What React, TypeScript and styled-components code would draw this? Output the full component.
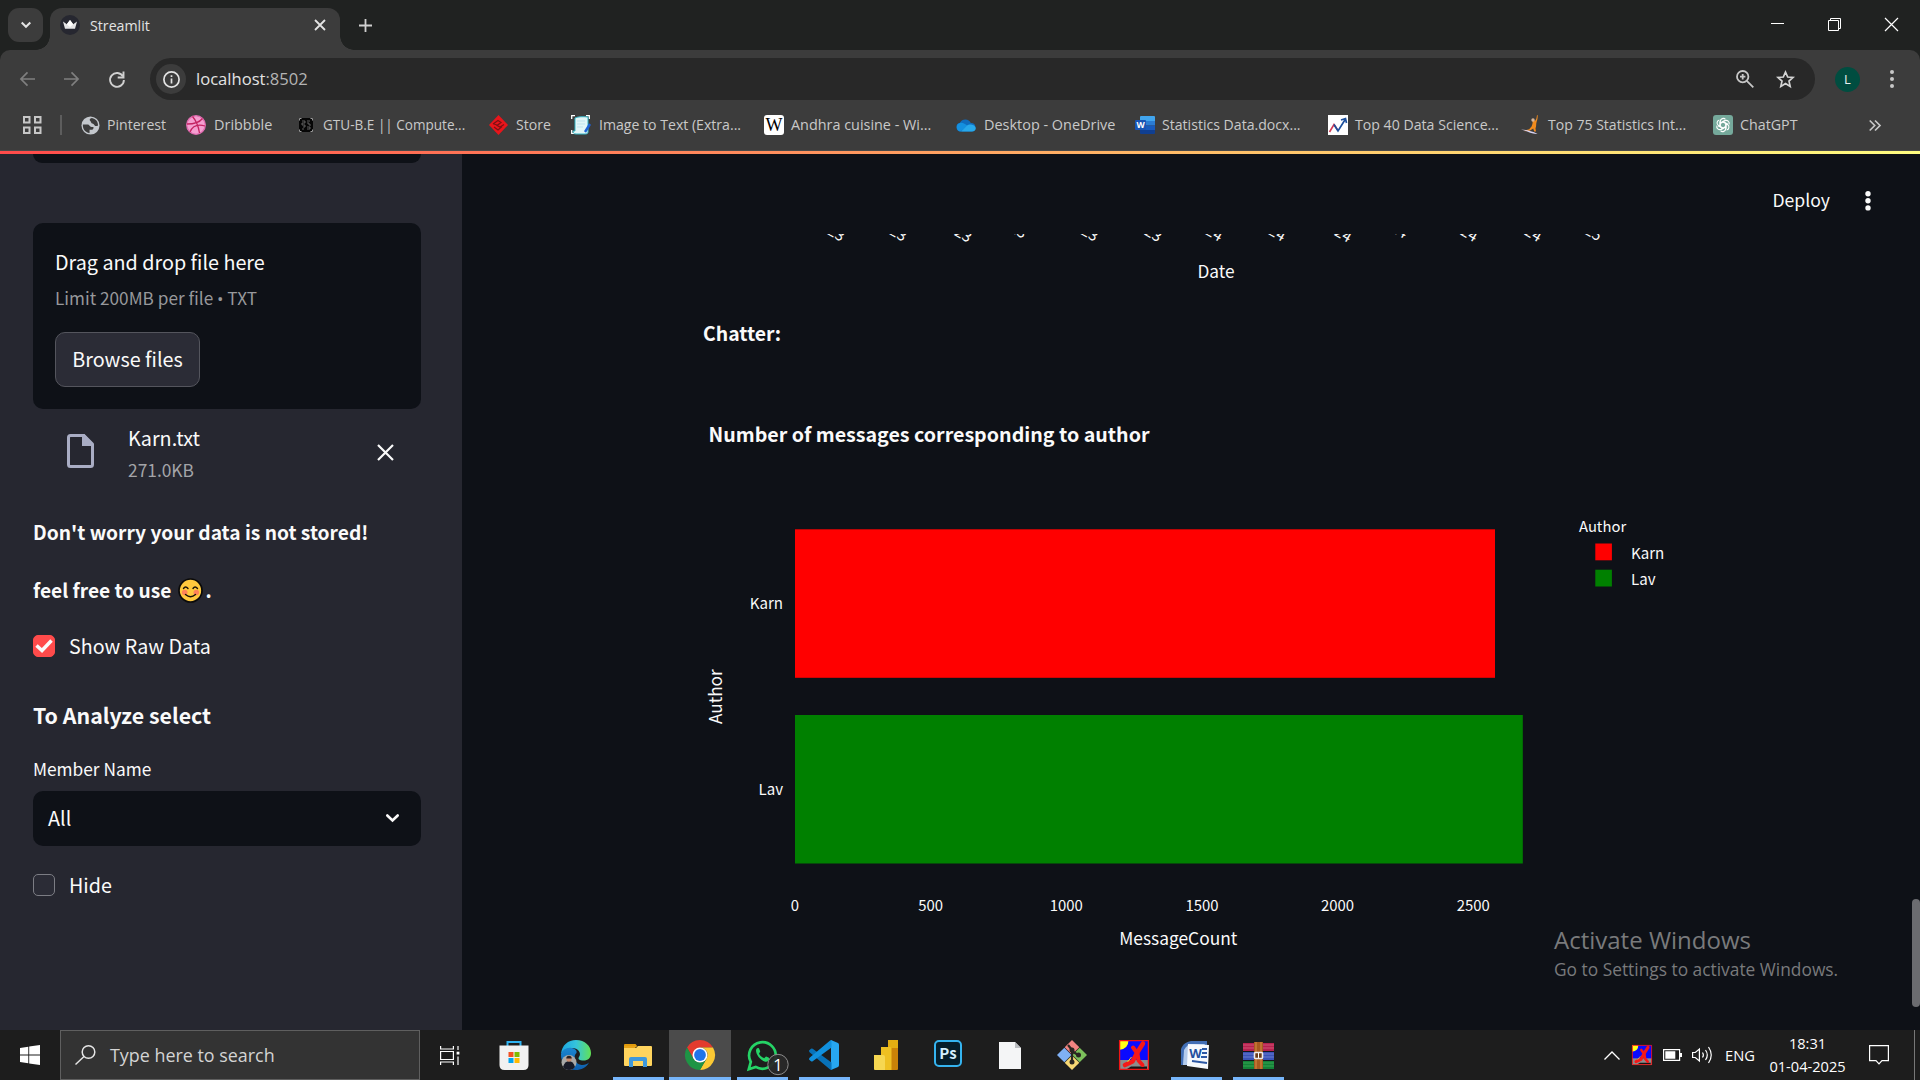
import React from "react";
import styled, { createGlobalStyle } from "styled-components";

const UI = `"Open Sans", "Noto Sans", sans-serif`;
const APP = `"Noto Sans CJK SC", "Noto Sans", sans-serif`;

const GlobalStyle = createGlobalStyle`
  * { box-sizing: border-box; }
  body { margin: 0; overflow: hidden; background: #0e1117; }
`;

const Screen = styled.div`
  width: 1920px;
  height: 1080px;
  display: flex;
  flex-direction: column;
  position: relative;
  overflow: hidden;
  white-space: nowrap;
  font-family: ${UI};
`;

const Icon = styled.svg`
  display: block;
  flex: none;
  overflow: visible;
`;

/* ---------- Browser chrome ---------- */

const TabStrip = styled.div`
  height: 50px;
  padding: 8px 22px 0 8px;
  display: flex;
  background: #202221;
`;
const TabSearch = styled.div`
  width: 35px;
  height: 34px;
  border-radius: 11px;
  background: #3c3c3c;
  display: flex;
  align-items: center;
  justify-content: center;
`;
const Tab = styled.div`
  margin-left: 7px;
  width: 290px;
  height: 42px;
  padding: 0 15px 8px 10px;
  border-radius: 12px 12px 0 0;
  background:#3c3c3c;
  display: flex;
  align-items: center;
  position: relative;
  &::before, &::after {
    content: "";
    position: absolute;
    bottom: 0;
    width: 14px;
    height: 14px;
  }
  &::before { left: -14px; background: radial-gradient(circle at 0 0, transparent 13.5px, #3c3c3c 14px); }
  &::after { right: -14px; background: radial-gradient(circle at 100% 0, transparent 13.5px, #3c3c3c 14px); }
`;
const TabTitle = styled.span`
  flex: 1;
  margin-left: 10px;
  padding-top: 1px;
  font-size: 14.2px;
  line-height: 34px;
  color: #e3e3e3;
`;
const NewTab = styled.div`
  padding: 11px 0 0 19px;
  flex: 1;
`;
const WindowButtons = styled.div`
  display: flex;
  align-items: flex-start;
  gap: 44px;
  padding: 10px 0 0;
`;

const ToolbarFrame = styled.div`
  background: #202221;
`;
const Toolbar = styled.div`
  height: 50px;
  padding: 8px 24px 0 20px;
  border-radius: 10px 10px 0 0;
  background: #3c3c3c;
  display: flex;
  align-items: center;
`;
const NavButtons = styled.div`
  width: 130px;
  flex: none;
  display: flex;
  gap: 29px;
`;
const Omnibox = styled.div`
  width: 1665px;
  flex: none;
  height: 42px;
  border-radius: 21px;
  background: #282828;
  padding: 0 20px 0 6px;
  display: flex;
  align-items: center;
`;
const SiteInfo = styled.div`
  width: 30px;
  height: 30px;
  border-radius: 50%;
  background: #3c3c3c;
  display: flex;
  align-items: center;
  justify-content: center;
`;
const Address = styled.span`
  flex: 1;
  margin-left: 10px;
  font-size: 16.6px;
  line-height: 40px;
  color: #e3e3e3;
`;
const Port = styled.span`
  color: #b4b4b4;
`;
const OmniActions = styled.div`
  display: flex;
  align-items: center;
  gap: 22px;
`;
const Avatar = styled.div`
  margin: 0 28px 0 20px;
  flex: none;
  width: 25px;
  height: 25px;
  border-radius: 50%;
  background: #004d40;
  color: #e8f0ee;
  font-size: 13px;
  line-height: 25px;
  text-align: center;
`;

const Bookmarks = styled.div`
  height: 51px;
  padding-left: 23px;
  background: #3c3c3c;
  border-bottom: 1px solid #4a4a4a;
  display: flex;
  align-items: center;
`;
const Divider = styled.div`
  width: 2px;
  height: 20px;
  margin: 0 19px 0 18px;
  background: #5d5d5d;
`;
const Bookmark = styled.div<{ $w: number; $gap?: number; $size?: number }>`
  width: ${(p) => p.$w}px;
  flex: none;
  display: flex;
  align-items: center;
  gap: ${(p) => p.$gap ?? 8}px;
  color: #c9c9c9;
  font-size: ${(p) => p.$size ?? 14.1}px;
  line-height: 48px;
`;
const Rainbow = styled.div`
  height: 3px;
  background: linear-gradient(90deg, #ff4b4b, #ff8a5c 38%, #ffbd68 62%, #fffd80);
`;

/* ---------- Streamlit page ---------- */

const Page = styled.div`
  height: 876px;
  display: flex;
  font-family: ${APP};
  color: #fafafa;
`;
const Sidebar = styled.aside`
  width: 462px;
  padding: 0 41px 0 33px;
  background: #262730;
  display: flex;
  flex-direction: column;
`;
const ScrolledCard = styled.div`
  height: 9px;
  margin-bottom: 60px;
  flex: none;
  border-radius: 0 0 10px 10px;
  background: #0e1117;
`;
const Dropzone = styled.div`
  height: 186px;
  padding: 23px 22px 22px;
  border-radius: 10px;
  background: #0e1117;
`;
const DropTitle = styled.div`
  font-size: 19.75px;
  line-height: 32px;
`;
const Limit = styled.div`
  height: 40px;
  font-size: 17.2px;
  line-height: 40px;
  margin-bottom: 14px;
  color: #97989b;
`;
const Bullet = styled.span`
  font-family: "Open Sans", sans-serif;
`;
const BrowseButton = styled.button`
  display: block;
  width: 145px;
  height: 55px;
  padding: 0 0 2px;
  border: 1px solid #54555d;
  border-radius: 10px;
  background: #2b2c36;
  color: #fafafa;
  font: 400 19.8px/51px ${APP};
`;
const FileRow = styled.div`
  height: 77px;
  padding: 14px 28px 0 34px;
  display: flex;
`;
const FileGlyph = styled.div`
  width: 61px;
  padding-top: 11px;
`;
const FileInfo = styled.div`
  flex: 1;
`;
const FileName = styled.div`
  font-size: 19.8px;
  line-height: 30px;
`;
const FileSize = styled.div`
  font-size: 17.35px;
  line-height: 34px;
  color: #a3a4a8;
`;
const RemoveFile = styled.div`
  padding-top: 22px;
`;
const Strong = styled.div<{ $top: number }>`
  margin-top: ${(p) => p.$top}px;
  height: 31px;
  display: flex;
  align-items: center;
  font-size: 19.2px;
  font-weight: 700;
  line-height: 31px;
`;
const EmojiSlot = styled.span`
  margin: 0 2px 0 7px;
`;
const CheckRow = styled.div<{ $top: number }>`
  margin-top: ${(p) => p.$top}px;
  height: 22px;
  display: flex;
  align-items: center;
  gap: 14px;
`;
const Box = styled.div<{ $on?: boolean }>`
  width: 22px;
  height: 22px;
  border-radius: 5px;
  border: 1px solid ${(p) => (p.$on ? "#ff4b4b" : "#7c7d84")};
  background: ${(p) => (p.$on ? "#ff4b4b" : "#2b2c36")};
  display: flex;
  align-items: center;
  justify-content: center;
`;
const CheckLabel = styled.span`
  font-size: 19.7px;
  line-height: 20px;
`;
const Subheader = styled.div`
  margin-top: 41px;
  font-size: 21.35px;
  font-weight: 700;
  line-height: 34px;
`;
const FieldLabel = styled.div`
  margin: 25px 0 10px;
  font-size: 17.3px;
  line-height: 24px;
`;
const Select = styled.div`
  height: 55px;
  padding: 0 22px 2px 15px;
  border-radius: 10px;
  background: #0e1117;
  display: flex;
  align-items: center;
  justify-content: space-between;
  font-size: 19.8px;
`;

const Main = styled.main`
  flex: 1;
  background: #0e1117;
  display: flex;
  flex-direction: column;
`;
const Header = styled.header`
  height: 80px;
  padding: 0 48px 0 0;
  display: flex;
  justify-content: flex-end;
  gap: 34px;
`;
const Deploy = styled.span`
  height: 80px;
  font-size: 17.6px;
  line-height: 92px;
`;
const MenuDots = styled.div`
  padding-top: 37px;
`;
const Content = styled.section`
  flex: 1;
  padding-left: 241px;
`;
const Chart = styled.svg`
  display: block;
  fill: #fafafa;
  font-family: ${APP};
`;
const ChatterTitle = styled.div`
  margin: 21px 0 52px;
  font-size: 19.4px;
  font-weight: 700;
  line-height: 31px;
`;
const Thumb = styled.div`
  position: absolute;
  left: 1912px;
  top: 899px;
  width: 8px;
  height: 108px;
  border-radius: 4px;
  background: #6b6c70;
`;
const Watermark = styled.div`
  position: absolute;
  left: 1554px;
  top: 924px;
  color: #797a7c;
`;
const WatermarkTitle = styled.div`
  font-size: 24px;
  line-height: 32px;
`;
const WatermarkText = styled.div`
  font-size: 17.35px;
  line-height: 26px;
`;

/* ---------- Taskbar ---------- */

const Taskbar = styled.div`
  height: 50px;
  background: #1d1d1d;
  display: flex;
  align-items: center;
  color: #fff;
`;
const StartButton = styled.div`
  width: 60px;
  padding-left: 20px;
`;
const SearchBox = styled.div`
  width: 360px;
  height: 50px;
  padding-left: 14px;
  border: 1px solid #5f5f5f;
  background: #333;
  display: flex;
  align-items: center;
  gap: 14px;
  color: #d4d4d4;
  font-size: 17.9px;
`;
const TaskView = styled.div`
  width: 63px;
  padding-left: 20px;
`;
const AppSlot = styled.div<{ $running?: boolean; $active?: boolean }>`
  width: 62px;
  height: 50px;
  display: flex;
  align-items: center;
  justify-content: center;
  background: ${(p) => (p.$active ? "#4b4b4b" : "transparent")};
  position: relative;
  &::after {
    content: "";
    position: absolute;
    bottom: 0;
    left: ${(p) => (p.$active ? 0 : 6)}px;
    right: ${(p) => (p.$active ? 0 : 5)}px;
    height: 3px;
    background: ${(p) => (p.$running || p.$active ? "#76b5fa" : "transparent")};
  }
`;
const Tray = styled.div`
  margin-left: auto;
  display: flex;
  align-items: center;
  height: 50px;
`;
const TrayItem = styled.div<{ $after: number }>`
  margin-right: ${(p) => p.$after}px;
`;
const Language = styled.div`
  width: 44px;
  font-size: 14.7px;
  line-height: 48px;
`;
const Clock = styled.div`
  width: 77px;
  margin-right: 23px;
  text-align: center;
  font-size: 14.6px;
  line-height: 23px;
  padding-bottom: 1px;
`;
const ShowDesktop = styled.div`
  width: 6px;
  height: 50px;
  border-left: 1px solid #777;
`;

/* ---------- Icons ---------- */

const Crown = () => (
  <Icon width="20" height="20" viewBox="0 0 20 20">
    <circle cx="10" cy="10" r="10" fill="#262730" />
    <path d="M3 6.5l3.8 2.8L10 5l3.2 4.3L17 6.5l-2 7.2H5z" fill="#e4e4e6" />
    <path d="M6.8 9.3L10 5l3.2 4.3L10 12z" fill="#fff" />
  </Icon>
);
const Cross = ({ size, color, w }: { size: number; color: string; w: number }) => (
  <Icon width={size} height={size} viewBox={`0 0 ${size} ${size}`}>
    <path d={`M0 0L${size} ${size}M${size} 0L0 ${size}`} stroke={color} strokeWidth={w} />
  </Icon>
);
const Arrow = ({ flip }: { flip?: boolean }) => (
  <Icon width="15" height="16" viewBox="0 0 16 16">
    <path d="M16 8H1.5M8 1L1 8l7 7" transform={flip ? "rotate(180 8 8)" : undefined} fill="none" stroke="#7f7f7f" strokeWidth="1.8" />
  </Icon>
);
const Dots = ({ r, step, color }: { r: number; step: number; color: string }) => (
  <Icon width="8" height={step * 2 + r * 2} viewBox={`0 0 8 ${step * 2 + r * 2}`} fill={color}>
    {[0, 1, 2].map((i) => <circle key={i} cx="4" cy={r + i * step} r={r} />)}
  </Icon>
);

const Globe = () => (
  <Icon width="19" height="19" viewBox="0 0 20 20">
    <circle cx="10" cy="10" r="9.5" fill="#c3c7cc" />
    <path d="M2 9h5c2 0 2 2.500 4 2.500h1.500c1.500 0 .5 3-1.500 3H9v3.500C4.500 17.500 1.500 13.500 2 9z" fill="#3c3c3c" />
    <path d="M11.500 2.200c-2.500.3-3 2-1.500 3.300 1.200 1 .3 2.200 2 2.500 2 .3 1.500 2 3 2.500 1 .3 2 0 2.900-.5C18 6 15.500 3 11.500 2.200z" fill="#3c3c3c" />
  </Icon>
);
const Ball = () => (
  <Icon width="20" height="20" viewBox="0 0 20 20" fill="none" stroke="#c32361" strokeWidth="1.300">
    <circle cx="10" cy="10" r="9.300" fill="#f49ed0" stroke="#e06bb0" />
    <path d="M6.500 1.500c4 4.500 6 10 7 16.500M1 9c7 0 12-1 15.500-5.500M4 17c2.500-6 8-8 15-6" />
  </Icon>
);
const Qr = () => (
  <Icon width="14" height="14" viewBox="0 0 14 14">
    <path d="M0 0h14v14H0z" fill="#060606" />
    <path d="M.5.5h2M11.500.5h2M.5 13.500h2M11.500 13.500h2M.5.5v2M13.500.5v2M.5 11.500v2M13.500 11.500v2" stroke="#9a9a9a" fill="none" />
    <path d="M3 3h3v2H3v2h3v2H4M8 3h3M8 5h2v2h2M8 9h3v2H8M3 11h2" stroke="#777" strokeWidth=".8" fill="none" />
  </Icon>
);
const RedDiamond = () => (
  <Icon width="19" height="20" viewBox="0 0 19 20">
    <path d="M9.500 0L19 10l-9.500 10L0 10z" fill="#e8151b" />
    <path d="M4 9l5-3.500 3 2-4 3 3 1.500 4-2.500M5 12l4 3 4-3.500M8 10l-3-1" stroke="#7d1013" strokeWidth="1.200" fill="none" />
  </Icon>
);
const ScanText = () => (
  <Icon width="20" height="20" viewBox="0 0 20 20">
    <path d="M.7 4V.7H4M15 .7h3.300V4M.7 15v3.300H4" fill="none" stroke="#fff" strokeWidth="1.300" />
    <path d="M4 3c3-1.500 8-1.500 13-1v15c0 1.500-1 2-3 2H5c-2 0-3-1-3-3h2z" fill="#e2f6f8" stroke="#35b5c6" />
    <path d="M6 6h8M6 9h8M6 12h6" stroke="#bfe3ee" />
    <path d="M14 17l5-8" stroke="#1f62d4" strokeWidth="2.400" />
  </Icon>
);
const WikiTile = styled.div`
  width: 20px;
  height: 20px;
  border-radius: 3px;
  background: #fff;
  color: #000;
  font: 18px/20px "Liberation Serif", serif;
  display: flex;
  justify-content: center;
`;
const Cloud = () => (
  <Icon width="20" height="13" viewBox="0 0 20 13">
    <path d="M4.500 12.500A4.400 4.400 0 014 3.800 6 6 0 0114.800 4 4.300 4.300 0 0116 12.500z" fill="#0f6cbd" />
    <path d="M4 3.900c3-.5 5 1 8 3L4.500 12.500A4.400 4.400 0 014 3.900z" fill="#1490df" />
    <path d="M5 12.500l5.500-5.200c2-2 4-1.800 5.500-1.500 5 1 5 6.700 0 6.700z" fill="#28a8ea" />
  </Icon>
);
const WordTile = () => (
  <Icon width="20" height="18" viewBox="0 0 20 18">
    <path d="M6 0h13q1 0 1 1v4H5V1q0-1 1-1z" fill="#41a5ee" />
    <path d="M5 5h15v4.500H5z" fill="#2b7cd3" />
    <path d="M5 9.500h15V14H5z" fill="#185abd" />
    <path d="M5 14h15v3q0 1-1 1H6q-1 0-1-1z" fill="#103f91" />
    <rect y="4" width="11" height="10" rx="1" fill="#1854b4" />
    <text x="5.500" y="12" fontSize="8.500" fontWeight="700" textAnchor="middle" fill="#fff">W</text>
  </Icon>
);
const TrendTile = () => (
  <Icon width="20" height="20" viewBox="0 0 20 20">
    <path d="M0 0h20v20H0z" fill="#fff" />
    <path d="M1.500 17L6 9.500l4 6" fill="none" stroke="#d23a55" strokeWidth="1.600" />
    <path d="M6 9.500l4 6.500 7.500-12M13 5l4.500-1.500L18.500 8" fill="none" stroke="#1c4f9c" strokeWidth="1.700" />
  </Icon>
);
const Surfer = () => (
  <Icon width="18" height="20" viewBox="0 0 18 20">
    <path d="M16 0l.7.300c0 3-.2 4-1 6.200-1 3 0 4-1.200 7l.5 3h-1.800l-1-3-3.500 2.300-5 .5V15.500l4.500-1.300 2.500-3c1-3 1-3 .8-5 .4-1.400 1.800-1.500 2.500-.3C15.800 4 15.500 2.500 16 0z" fill="#f08a1d" />
    <circle cx="12" cy="5" r="1.700" fill="#d9b79a" />
    <path d="M0 14.500c6 .5 11 1.500 16.500 4.500-6 .5-10-3-16.500-4.500z" fill="#d9d2f0" />
  </Icon>
);
const Knot = () => (
  <Icon width="20" height="20" viewBox="0 0 20 20">
    <rect width="20" height="20" rx="3" fill="#75a99b" />
    <g fill="none" stroke="#fff" strokeWidth="1.100">
      {[0, 60, 120, 180, 240, 300].map((a) => (
        <path key={a} d="M7.300 11.500V6.300a3 3 0 015.200-1.900M7.300 8l4.500-2.600" transform={`rotate(${a} 10 10)`} />
      ))}
    </g>
  </Icon>
);

const Smile = () => (
  <Icon width="25" height="25" viewBox="0 0 25 25" role="img" aria-label="😊">
    <circle cx="12.500" cy="12.500" r="11.500" fill="#ffc83d" stroke="#0a0a0a" strokeWidth="1.700" />
    <circle cx="6.700" cy="14.500" r="2.800" fill="#ff8257" />
    <circle cx="18.300" cy="14.500" r="2.800" fill="#ff8257" />
    <path d="M5.500 10.500q2-3 4.500 0M15 10.500q2-3 4.500 0M7.500 16.500q5 4.500 10 0" fill="none" stroke="#1a1208" strokeWidth="1.400" strokeLinecap="round" />
  </Icon>
);

const StoreBag = () => (
  <Icon width="29" height="30" viewBox="0.500 0 29 30">
    <path d="M8 7V2h13v5" fill="none" stroke="#2fb3f2" strokeWidth="2" />
    <path d="M0 5.500h29V25q0 5-5 5H5q-5 0-5-5z" fill="#f1f1f1" />
    <path d="M9 12h5v5H9z" fill="#f25022" />
    <path d="M15 12h5v5h-5z" fill="#7fba00" />
    <path d="M9 18h5v5H9z" fill="#00a4ef" />
    <path d="M15 18h5v5h-5z" fill="#ffb900" />
  </Icon>
);
const Edge = () => (
  <Icon width="30" height="30" viewBox="0 0 30 30">
    <defs>
      <linearGradient id="edgeTop" x1="0" x2="1"><stop offset="0" stopColor="#1ba5e0" /><stop offset=".5" stopColor="#35c4dc" /><stop offset="1" stopColor="#62e254" /></linearGradient>
      <linearGradient id="edgeLow" x1="0" y1="0" x2="0" y2="1"><stop offset="0" stopColor="#1a86d0" /><stop offset="1" stopColor="#0f5fae" /></linearGradient>
    </defs>
    <path d="M0 14C1 5 7 0 15 0c9 0 15 6 15 13 0 5-3 7.500-7.500 7.500-4 0-6-1.500-4.500-3.500 3-4-1-9-7-9-5 0-9 3-11 6z" fill="url(#edgeTop)" />
    <path d="M0 14C2 9 6 7 11 8c4 1 5 3 4.500 5-3 2-3 11 5 12 3 .3 6-1 7.500-2.500C25 28 20 30 15 30 6 30-.5 23 0 14z" fill="url(#edgeLow)" />
    <circle cx="8" cy="22.500" r="7.500" fill="#a9a9a8" />
    <path d="M2 27c1-4 3.500-6 6-6s5 2 6 6a7.500 7.500 0 01-12 0z" fill="#191b28" />
    <circle cx="8" cy="19" r="2.700" fill="#c98c70" />
    <path d="M5.300 18.500a2.700 2.700 0 015.400 0z" fill="#2a2020" />
  </Icon>
);
const Folder = () => (
  <Icon width="28" height="23" viewBox="0 0 28 23">
    <path d="M0 1q0-1 1-1h10.500l2 2.500H0z" fill="#e09a0c" />
    <path d="M0 4h12l2-2h13q1 0 1 1v18q0 1-1 1H1q-1 0-1-1z" fill="#ffd45e" />
    <path d="M0 2h13l-2 2H0z" fill="#e8a317" />
    <path d="M5 23v-8q0-2 2-2h14q2 0 2 2v8h-4v-6H9v6z" fill="#3f98dc" />
  </Icon>
);
const Chrome = () => (
  <Icon width="30" height="30" viewBox="0 0 30 30">
    <path d="M2 7.500A15 15 0 0128 7.500H15L8.500 18.700z" fill="#e33b2e" />
    <path d="M28 7.500A15 15 0 0115 30l6.500-11.200A7.500 7.500 0 0021.500 11 7.500 7.500 0 0015 7.500z" fill="#fcc934" />
    <path d="M15 30A15 15 0 012 7.500l6.500 11.300A7.500 7.500 0 0015 22.500a7.500 7.500 0 006.500-3.700z" fill="#1e9445" />
    <circle cx="15" cy="15" r="7.500" fill="#fff" />
    <circle cx="15" cy="15" r="5.900" fill="#1f74ea" />
  </Icon>
);
const WhatsApp = () => (
  <Icon width="31" height="31" viewBox="0 0 31 31">
    <path d="M1.800 29.200l2-7.300a13.300 13.300 0 114.900 5z" fill="none" stroke="#25d366" strokeWidth="2.700" />
    <path d="M9 10.500c0-1.500 1.200-3 2.500-2.500.6.200 1.700 3 1.700 3.500s-1.300 1.800-1.100 2.200c1 2 2.500 3.500 5 4.500.6.200 1.500-1.700 2-1.600s3.200 1.400 3.300 1.800c.2 1.500-1.400 3.300-3.400 3.300C15 21.700 9 15.500 9 10.500z" fill="#25d366" />
    <circle cx="31" cy="24.500" r="10.200" fill="#292929" fillOpacity=".95" stroke="#8b8b8b" />
    <text x="31" y="30.500" fontSize="16.500" textAnchor="middle" fill="#fff">1</text>
  </Icon>
);
const Code = () => (
  <Icon width="30" height="30" viewBox="0 0 30 30">
    <path d="M22 0l7 3q1 .5 1 2v20q0 1.500-1 2l-7 3z" fill="#27a7f0" />
    <path d="M0 10.500l2-1.700q.8-.7 1.700 0L22.500 22.500V30q-1 0-2-1L.3 12z" fill="#0872b9" />
    <path d="M0 19.500l2 1.700q.8.700 1.700 0L22.500 7.500V0q-1 0-2 1L.3 18z" fill="#1190dd" />
  </Icon>
);
const PowerBi = () => (
  <Icon width="24" height="30" viewBox="0 0 24 30">
    <path d="M14 0h10v29q0 1-1 1h-9z" fill="#c98208" />
    <path d="M14 0h10v8H14z" fill="#e2ad12" />
    <path d="M7 7h9q1.500 0 1.500 1.500V30H7z" fill="#eec022" />
    <path d="M0 15h9q2 0 2 2v13H1q-1 0-1-1z" fill="#f6d751" />
  </Icon>
);
const PsTile = styled.div`
  width: 28px;
  height: 27px;
  margin-bottom: 3px;
  border: 2px solid #35b4f0;
  border-radius: 5px;
  background: #061e2b;
  color: #d5f0ff;
  font: 600 15px/22px ${APP};
  text-align: center;
`;
const BlankDoc = () => (
  <Icon width="22" height="27" viewBox="0 0 22 27">
    <path d="M0 0h16l6 6v21H0z" fill="#f4f5f6" />
    <path d="M16 0v6h6z" fill="#b9bcc0" />
  </Icon>
);
const Git = () => (
  <Icon width="30" height="30" viewBox="0 0 30 30">
    <path d="M15 0l7.300 7.300L15 14.600 7.700 7.300z" fill="#f28482" />
    <path d="M7.300 7.700l7.300 7.300-7.300 7.300L0 15z" fill="#7fb0f5" />
    <path d="M22.700 7.700L30 15l-7.300 7.300-7.300-7.300z" fill="#7cc05b" />
    <path d="M15 15.400l7.300 7.300L15 30l-7.300-7.300z" fill="#f7d774" />
    <path d="M11 5l4 5v13M15 11l6 4" fill="none" stroke="#2a2622" strokeWidth="2.200" />
    <circle cx="15" cy="10" r="2.500" fill="#2a2622" /><circle cx="15" cy="22" r="2.500" fill="#2a2622" /><circle cx="21.500" cy="15" r="2.500" fill="#2a2622" />
  </Icon>
);
const RedFigure = ({ size }: { size: number }) => (
  <Icon width={size} height={size} viewBox="0 0 30 30">
    <path d="M0 0h30v30H0z" fill="#0a0aff" />
    <path d="M0 20h30v10H0z" fill="#8c8c8c" />
    <path d="M12 26.500h16V29H8z" fill="#141414" />
    <path d="M0 0h9.500q0 9-9.500 10z" fill="#ffff1a" />
    <path d="M24 3.500l-6 9.500-4.500 8.500L6 25" fill="none" stroke="#f51818" strokeWidth="4.600" strokeLinecap="round" strokeLinejoin="round" />
    <path d="M14 7.500l4.500 6 1 7 4 4.500" fill="none" stroke="#f51818" strokeWidth="4" strokeLinecap="round" strokeLinejoin="round" />
    <path d="M12.500 17l-4 5" stroke="#e8d82c" />
    <path d="M.6.600h28.800v28.800H.6z" fill="none" stroke="#f01414" strokeWidth="1.300" />
  </Icon>
);
const WordPage = () => (
  <Icon width="30" height="28" viewBox="0 0 30 28">
    <path d="M0 8C2 3 5 1 10 0h16v24H0z" fill="#416eb5" />
    <path d="M3 9c2-4 5-6 9-6h12L10 24H2z" fill="#b4cbec" />
    <path d="M7 3l21 1-1 24-21-3z" fill="#f6f9fd" />
    <path d="M21 8h5M21 12h5M20 16h6M11 20l15 2" stroke="#2c58a5" strokeWidth="1.800" />
    <text x="14.500" y="17" fontSize="13" fontWeight="700" textAnchor="middle" fill="#23509f">W</text>
  </Icon>
);
const Books = () => (
  <Icon width="31" height="27" viewBox="0 0 31 27">
    <path d="M0 1h31v8H0z" fill="#b6224f" /><path d="M0 3h31M0 6h31" stroke="#d95f7d" strokeWidth=".8" />
    <path d="M0 10h31v8H0z" fill="#3b53b7" /><path d="M0 12h31M0 15h31" stroke="#7386d6" strokeWidth=".8" />
    <path d="M0 19h31v8H0z" fill="#148138" /><path d="M0 21h31M0 24h31" stroke="#3eae58" strokeWidth=".8" />
    <path d="M0 9.500h31M0 18.500h31" stroke="#15151c" />
    <path d="M11 0h9v27h-9z" fill="#a85a20" />
    <path d="M13 0v27M18 0v27" stroke="#d88b42" />
    <rect x="11.500" y="10.500" width="8" height="6" rx="1" fill="#6b3a18" stroke="#ececec" strokeWidth="1.600" />
    <path d="M15.500 11v5" stroke="#fff" />
  </Icon>
);

/* ---------- Charts ---------- */

const dateTicks: [number, number, string][] = [
  [841, 242, "23"], [903, 242, "23"], [968, 243, "23"], [1023, 239, "23"], [1094.500, 242, "23"], [1158, 242.500, "23"],
  [1219, 242, "24"], [1282, 242, "24"], [1348, 243, "24"], [1404, 239, "24"], [1474, 242.500, "24"], [1538, 242.500, "24"], [1598, 241.500, "25"],
];
const countTicks = [0, 500, 1000, 1500, 2000, 2500];
const authors = [
  { name: "Karn", color: "#ff0000", y: 529.3, width: 700, legend: 543.5 },
  { name: "Lav", color: "#008000", y: 715, width: 727.8, legend: 569.700 },
];

const DateAxis = () => (
  <Chart width="1200" height="62" viewBox="703 234 1200 62">
    {dateTicks.map(([x, y, s]) => (
      <text key={x} x={x} y={y} fontSize="15" textAnchor="end" transform={`rotate(30 ${x} ${y})`}>{s}</text>
    ))}
    <text x="1216" y="278.300" fontSize="17.300" textAnchor="middle">Date</text>
  </Chart>
);
const AuthorChart = () => (
  <Chart width="1200" height="580" viewBox="703 400 1200 580">
    <text x="708.500" y="442" fontSize="19.650" fontWeight="700">Number of messages corresponding to author</text>
    {authors.map((a) => (
      <g key={a.name}>
        <rect x="795" y={a.y} width={a.width} height="148.500" fill={a.color} />
        <text x="783" y={a.y + 79.800} fontSize="15.100" textAnchor="end">{a.name}</text>
        <rect x="1595.300" y={a.legend} width="16.600" height="16.800" fill={a.color} />
        <text x="1631" y={a.legend + 15.700} fontSize="15.100">{a.name}</text>
      </g>
    ))}
    <text x="722.300" y="696.700" fontSize="17.200" textAnchor="middle" transform="rotate(-90 722.300 696.700)">Author</text>
    {countTicks.map((t) => (
      <text key={t} x={795 + t * 0.27128} y="911" fontSize="14.900" textAnchor="middle">{t}</text>
    ))}
    <text x="1178.300" y="944.500" fontSize="17.350" textAnchor="middle">MessageCount</text>
    <text x="1579" y="532.300" fontSize="14.800">Author</text>
  </Chart>
);

export default function App() {
  return (
    <Screen>
      <GlobalStyle />
      <TabStrip>
        <TabSearch>
          <Icon width="10" height="6" viewBox="0 0 10 6"><path d="M.7.500L5 4.800 9.300.500" fill="none" stroke="#e3e3e3" strokeWidth="2" /></Icon>
        </TabSearch>
        <Tab>
          <Crown />
          <TabTitle>Streamlit</TabTitle>
          <Cross size={10} color="#e3e3e3" w={1.8} />
        </Tab>
        <NewTab>
          <Icon width="13" height="13" viewBox="0 0 13 13"><path d="M6.500 0v13M0 6.500h13" stroke="#d0d0d0" strokeWidth="1.800" /></Icon>
        </NewTab>
        <WindowButtons>
          <Icon width="13" height="13" viewBox="0 0 13 13"><path d="M0 5.500h13" stroke="#fff" /></Icon>
          <Icon width="13" height="13" viewBox="0 0 13 13"><path d="M.5 2.500h10v10H.5zM2.500 2.500v-2h10v10h-2" fill="none" stroke="#fff" /></Icon>
          <Cross size={13} color="#fff" w={1.2} />
        </WindowButtons>
      </TabStrip>
      <ToolbarFrame>
        <Toolbar>
          <NavButtons>
            <Arrow />
            <Arrow flip />
            <Icon width="17" height="16" viewBox="-1 0 17 16">
              <path d="M14 5.500A6.900 6.900 0 1014.900 9" fill="none" stroke="#d0d0d0" strokeWidth="1.900" />
              <path d="M14.500.5v6H8.700" fill="none" stroke="#d0d0d0" strokeWidth="1.900" />
            </Icon>
          </NavButtons>
          <Omnibox>
            <SiteInfo>
              <Icon width="17" height="17" viewBox="0 0 17 17">
                <circle cx="8.500" cy="8.500" r="7.600" fill="none" stroke="#e3e3e3" strokeWidth="1.700" />
                <path d="M8.500 7.500v5M8.500 4.300v1.800" stroke="#e3e3e3" strokeWidth="1.700" />
              </Icon>
            </SiteInfo>
            <Address>localhost<Port>:8502</Port></Address>
            <OmniActions>
              <Icon width="18" height="18" viewBox="0 0 18 18" fill="none" stroke="#c7c7c7" strokeWidth="1.800">
                <circle cx="6.700" cy="6.700" r="5.700" /><path d="M10.800 10.800l6.500 6.500M6.700 4v5.400M4 6.700h5.400" />
              </Icon>
              <Icon width="19" height="18" viewBox="0 0 19 18" fill="none" stroke="#d4d4d4" strokeWidth="1.700">
                <path d="M9.500 2l2.200 5 5.300.5-4 3.600 1.200 5.300-4.700-2.800-4.700 2.800L6 11.100 2 7.500 7.300 7z" />
              </Icon>
            </OmniActions>
          </Omnibox>
          <Avatar>L</Avatar>
          <Dots r={2} step={7} color="#c7c7c7" />
        </Toolbar>
      </ToolbarFrame>
      <Bookmarks>
        <Icon width="19" height="18" viewBox="0 0 19 18" fill="none" stroke="#c7c7c7" strokeWidth="2">
          <path d="M1 1h5.500v5.500H1zM12 1h5.500v5.500H12zM1 11.500h5.500V17H1zM12 11.500h5.500V17H12z" />
        </Icon>
        <Divider />
        <Bookmark $w={105} $gap={7}><Globe />Pinterest</Bookmark>
        <Bookmark $w={113} $size={14.45}><Ball />Dribbble</Bookmark>
        <Bookmark $w={190} $gap={10} $size={13.55}><Qr />GTU-B.E || Compute...</Bookmark>
        <Bookmark $w={82}><RedDiamond />Store</Bookmark>
        <Bookmark $w={193} $size={14.1}><ScanText />Image to Text (Extra...</Bookmark>
        <Bookmark $w={192} $gap={7} $size={14.4}><WikiTile>W</WikiTile>Andhra cuisine - Wi...</Bookmark>
        <Bookmark $w={179} $size={14.45}><Cloud />Desktop - OneDrive</Bookmark>
        <Bookmark $w={193} $gap={7} $size={14.1}><WordTile />Statistics Data.docx...</Bookmark>
        <Bookmark $w={193} $gap={7} $size={14.15}><TrendTile />Top 40 Data Science...</Bookmark>
        <Bookmark $w={192} $gap={9} $size={14.05}><Surfer />Top 75 Statistics Int...</Bookmark>
        <Bookmark $w={156} $gap={7} $size={14.25}><Knot />ChatGPT</Bookmark>
        <Icon width="12" height="11" viewBox="0 0 12 11" fill="none" stroke="#c7c7c7" strokeWidth="1.700">
          <path d="M.7.500l5 5-5 5M6 .5l5 5-5 5" />
        </Icon>
      </Bookmarks>
      <Rainbow />

      <Page>
        <Sidebar>
          <ScrolledCard />
          <Dropzone>
            <DropTitle>Drag and drop file here</DropTitle>
            <Limit>Limit 200MB per file <Bullet>•</Bullet> TXT</Limit>
            <BrowseButton>Browse files</BrowseButton>
          </Dropzone>
          <FileRow>
            <FileGlyph>
              <Icon width="27" height="34" viewBox="0 0 27 34">
                <path d="M16.500 1.500H3.500q-2 0-2 2v27q0 2 2 2h20q2 0 2-2V11z" fill="none" stroke="#a9adc4" strokeWidth="3" />
                <path d="M15 0h2.500L27 9.500V12H15z" fill="#a9adc4" />
              </Icon>
            </FileGlyph>
            <FileInfo>
              <FileName>Karn.txt</FileName>
              <FileSize>271.0KB</FileSize>
            </FileInfo>
            <RemoveFile><Cross size={15} color="#fafafa" w={2.2} /></RemoveFile>
          </FileRow>
          <Strong $top={31}>Don't worry your data is not stored!</Strong>
          <Strong $top={27}>feel free to use<EmojiSlot><Smile /></EmojiSlot>.</Strong>
          <CheckRow $top={29}>
            <Box $on>
              <Icon width="18" height="14" viewBox="0 0 18 14"><path d="M1.500 6.500l5.500 5L16.500 1.500" fill="none" stroke="#fafafa" strokeWidth="3.500" /></Icon>
            </Box>
            <CheckLabel>Show Raw Data</CheckLabel>
          </CheckRow>
          <Subheader>To Analyze select</Subheader>
          <FieldLabel>Member Name</FieldLabel>
          <Select>
            All
            <Icon width="13" height="8" viewBox="0 0 13 8"><path d="M1.300 1.500l5.200 5 5.200-5" fill="none" stroke="#fafafa" strokeWidth="2.600" strokeLinecap="round" /></Icon>
          </Select>
          <CheckRow $top={28}>
            <Box />
            <CheckLabel>Hide</CheckLabel>
          </CheckRow>
        </Sidebar>
        <Main>
          <Header>
            <Deploy>Deploy</Deploy>
            <MenuDots><Dots r={2.700} step={7.100} color="#fafafa" /></MenuDots>
          </Header>
          <Content>
            <DateAxis />
            <ChatterTitle>Chatter:</ChatterTitle>
            <AuthorChart />
          </Content>
        </Main>
      </Page>
      <Thumb />
      <Watermark>
        <WatermarkTitle>Activate Windows</WatermarkTitle>
        <WatermarkText>Go to Settings to activate Windows.</WatermarkText>
      </Watermark>

      <Taskbar>
        <StartButton>
          <Icon width="20" height="20" viewBox="0 0 20 20" fill="#fff">
            <path d="M0 3l8.300-1.200v7.700H0zM9.200 1.600L20 0v9.500H9.200zM0 10.500h8.300v7.700L0 17zM9.200 10.500H20V20L9.200 18.400z" />
          </Icon>
        </StartButton>
        <SearchBox>
          <Icon width="21" height="20" viewBox="0 0 21 20" fill="none" stroke="#e6e6e6" strokeWidth="1.500">
            <circle cx="13.500" cy="7" r="6.300" /><path d="M9 11.500L.5 19.500" />
          </Icon>
          Type here to search
        </SearchBox>
        <TaskView>
          <Icon width="20" height="19" viewBox="0 0 20 19" fill="none" stroke="#fff" strokeWidth="1.200">
            <path d="M.6 0v3h12.800V0M.6 5.500h12.800v8H.6zM.6 19v-3h12.800v3M18 0v4M18 10.500V19" /><path d="M16.600 5.700h2.800v2.800h-2.800z" fill="#fff" stroke="none" />
          </Icon>
        </TaskView>
        <AppSlot><StoreBag /></AppSlot>
        <AppSlot><Edge /></AppSlot>
        <AppSlot $running><Folder /></AppSlot>
        <AppSlot $active><Chrome /></AppSlot>
        <AppSlot $running><WhatsApp /></AppSlot>
        <AppSlot $running><Code /></AppSlot>
        <AppSlot><PowerBi /></AppSlot>
        <AppSlot><PsTile>Ps</PsTile></AppSlot>
        <AppSlot><BlankDoc /></AppSlot>
        <AppSlot><Git /></AppSlot>
        <AppSlot><RedFigure size={30} /></AppSlot>
        <AppSlot $running><WordPage /></AppSlot>
        <AppSlot $running><Books /></AppSlot>
        <Tray>
          <TrayItem $after={12}>
            <Icon width="16" height="9" viewBox="0 0 16 9"><path d="M.5 8.500L8 1l7.500 7.500" fill="none" stroke="#fff" strokeWidth="1.300" /></Icon>
          </TrayItem>
          <TrayItem $after={11}><RedFigure size={20} /></TrayItem>
          <TrayItem $after={10}>
            <Icon width="19" height="12" viewBox="0 0 19 12">
              <path d="M.6.600h16v10.800H.6z" fill="none" stroke="#fff" strokeWidth="1.200" />
              <path d="M2.300 2.300h10v7.400h-10zM17 4h2v4h-2z" fill="#fff" />
            </Icon>
          </TrayItem>
          <TrayItem $after={12}>
            <Icon width="21" height="18" viewBox="0 0 21 18" fill="none" stroke="#fff" strokeWidth="1.200">
              <path d="M.6 6.500h2.700L7.400 3v12l-4.100-3.500H.6zM10.500 6.500q1.800 2.500 0 5M13.500 4q3.600 5 0 10M16.500 1q5.500 8 0 16" />
            </Icon>
          </TrayItem>
          <Language>ENG</Language>
          <Clock>18:31<br />01-04-2025</Clock>
          <TrayItem $after={25}>
            <Icon width="20" height="20" viewBox="0 0 20 20" fill="none" stroke="#fff" strokeWidth="1.200">
              <path d="M.6.600h18.800v15H13L10 18.800 7 15.600H.6z" />
            </Icon>
          </TrayItem>
          <ShowDesktop />
        </Tray>
      </Taskbar>
    </Screen>
  );
}
